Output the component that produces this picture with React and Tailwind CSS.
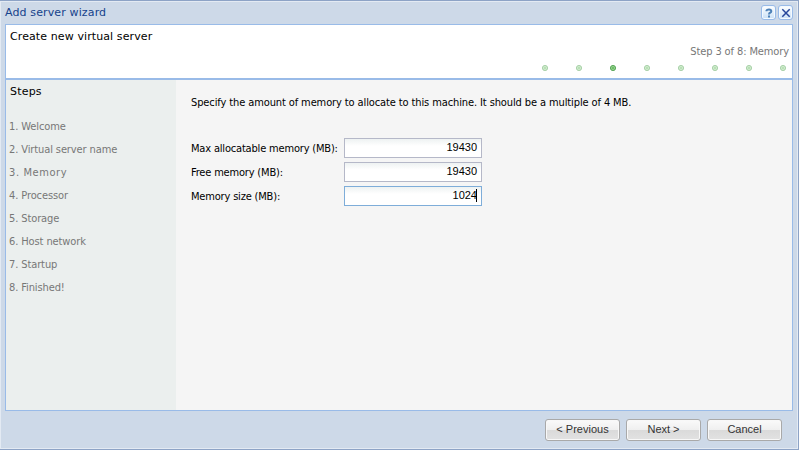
const steps = ['Welcome', 'Virtual server name', 'Memory', 'Processor', 'Storage', 'Host network', 'Startup', 'Finished!'];

const fields = [
  { label: 'Max allocatable memory (MB):', value: '19430' },
  { label: 'Free memory (MB):', value: '19430' },
  { label: 'Memory size (MB):', value: '1024', focused: true },
];

function Tool({ children }) {
  return (
    <span className="flex size-[15px] items-center justify-center rounded-[3px] border border-[#99bbe8] bg-linear-to-b from-white to-[#c9e0f6] shadow-[inset_0_0_0_1px_#f3f9ff]">
      {children}
    </span>
  );
}

function Dot({ active }) {
  return (
    <svg className="block size-[6px]" viewBox="0 0 6 6">
      <circle cx="3" cy="3" r="2.6" fill={active ? '#92d28c' : '#cfeccd'} stroke={active ? '#4f9f4f' : '#a3cca3'} strokeWidth="0.9" />
      <rect x="2" y="2" width="2" height="2" fill={active ? '#6fbd69' : '#b9e0b6'} />
    </svg>
  );
}

function Button({ children }) {
  return (
    <button className="h-[22px] w-[75px] rounded-[3px] border border-[#a9a9a9] bg-[linear-gradient(#fafafa_0%,#efefef_50%,#dadada_51%,#e2e2e2_100%)] pb-[2px] font-['Liberation_Sans',sans-serif] text-[11px] leading-[18px] tracking-normal text-[#333] shadow-[inset_0_0_0_1px_#f8f8f8]">
      {children}
    </button>
  );
}

export default function App() {
  return (
    <div className="flex h-[450px] w-[799px] flex-col border-t border-r border-b border-[#8da3c6] bg-[#cdd9e8] font-['DejaVu_Sans_Condensed','DejaVu_Sans',sans-serif] text-[11px] leading-[14px] tracking-[-0.11px] text-black">
      <div className="flex min-h-0 flex-1 flex-col border border-[#e3eaf3] px-1">
        <header className="flex h-[22px] shrink-0 items-start justify-between pt-[3px]">
          <h1 className="mt-px font-['DejaVu_Sans',sans-serif] tracking-[0.13px] text-[#15428b]">Add server wizard</h1>
          <div className="flex gap-[2px]">
            <Tool>
              <svg className="size-[10px] shrink-0" viewBox="0 0 10 10" fill="none" stroke="#4d81b8" strokeWidth="2">
                <path d="M2.5 3.2V2.5Q2.8 1.5 5 1.5T7.3 3.2Q7.3 4.2 6 4.8Q5 5.2 5 6.5M5 7.5v2" />
              </svg>
            </Tool>
            <Tool>
              <svg className="size-[10px] shrink-0" viewBox="0 0 10 10" stroke="#24459b" strokeWidth="1.5">
                <path d="M1.3 1.3l7.4 7.4M8.7 1.3L1.3 8.7" />
              </svg>
            </Tool>
          </div>
        </header>
        <section className="flex h-[56px] shrink-0 flex-col border border-b-2 border-[#99bbe8] bg-white">
          <h2 className="ml-1 mt-[5px] font-['DejaVu_Sans',sans-serif] tracking-[0.1px]">Create new virtual server</h2>
          <p className="mr-[3px] mt-px text-right text-[#777]">Step 3 of 8: Memory</p>
          <div className="mr-[6px] mt-[6px] flex justify-end gap-[28px]">
            {steps.map((s, i) => <Dot key={s} active={i === 2} />)}
          </div>
        </section>
        <main className="flex h-[331px] shrink-0 border border-t-0 border-[#99bbe8]">
          <nav className="w-[170px] shrink-0 bg-[#ebefee] pl-[3px] pt-[5px]">
            <h3 className="ml-px mb-[16px] font-['DejaVu_Sans',sans-serif] tracking-[0.2px]">Steps</h3>
            <ol className="text-[#777]">
              {steps.map((s, i) => (
                <li key={s} className={i === 2 ? 'h-[23px] leading-[23px] tracking-[0.6px]' : 'h-[23px] leading-[23px]'}>
                  {i + 1}. {s}
                </li>
              ))}
            </ol>
          </nav>
          <div className="flex-1 bg-[#f5f5f5] pl-[15px] pt-[16px]">
            <p className="mb-[28px] whitespace-nowrap">Specify the amount of memory to allocate to this machine. It should be a multiple of 4 MB.</p>
            <div className="flex flex-col gap-1">
              {fields.map((f) => (
                <label key={f.label} className="flex h-[20px] items-start">
                  <span className="w-[153px] whitespace-nowrap pt-1 tracking-[-0.18px]">{f.label}</span>
                  <span className={(f.focused ? 'border-[#7eadd9]' : 'border-[#b5b8c8]') + " flex h-[20px] w-[138px] items-start justify-end border bg-[linear-gradient(#eef2f2,#fff_7px)] pr-1 pt-px font-['Liberation_Sans',sans-serif] text-[11px] leading-[14px] tracking-normal"}>
                    {f.value}
                    {f.focused && <span className="-ml-px mt-px h-[13px] w-px bg-black" />}
                  </span>
                </label>
              ))}
            </div>
          </div>
        </main>
        <footer className="flex justify-end gap-[6px] pr-[11px] pt-[8px]">
          <Button>&lt; Previous</Button>
          <Button>Next &gt;</Button>
          <Button>Cancel</Button>
        </footer>
      </div>
    </div>
  );
}
